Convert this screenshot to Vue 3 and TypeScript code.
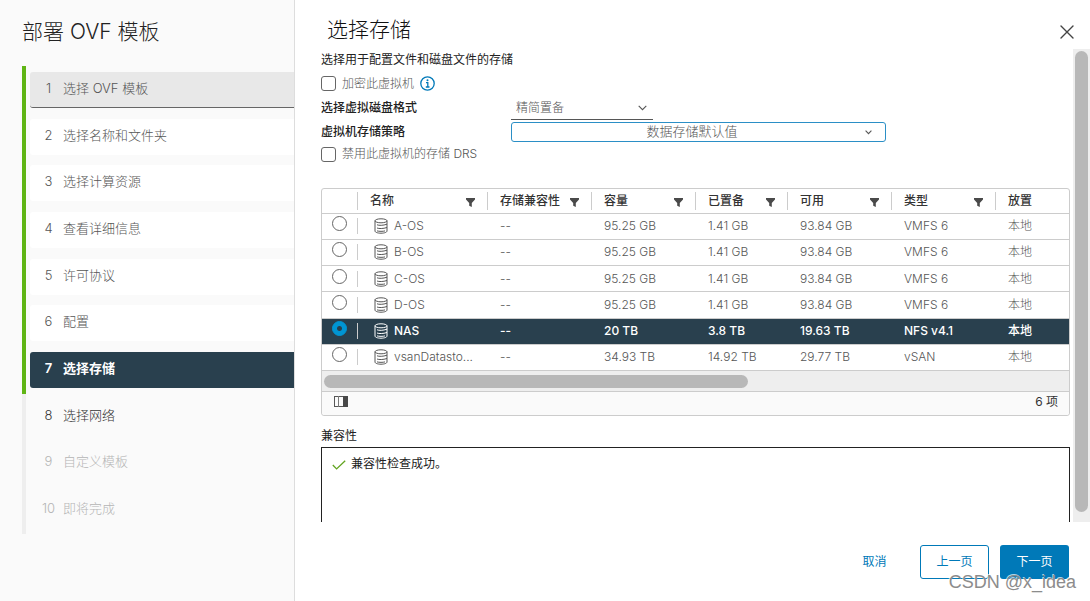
<script setup lang="ts">
import { ref } from 'vue'

type StepState = 'visited' | 'done' | 'active' | 'next' | 'disabled'

interface Step {
  label: string
  state: StepState
}

interface Datastore {
  name: string
  capacity: string
  provisioned: string
  free: string
  type: string
}

const steps: Step[] = [
  { label: '选择 OVF 模板', state: 'visited' },
  { label: '选择名称和文件夹', state: 'done' },
  { label: '选择计算资源', state: 'done' },
  { label: '查看详细信息', state: 'done' },
  { label: '许可协议', state: 'done' },
  { label: '配置', state: 'done' },
  { label: '选择存储', state: 'active' },
  { label: '选择网络', state: 'next' },
  { label: '自定义模板', state: 'disabled' },
  { label: '即将完成', state: 'disabled' },
]

const columns = ['名称', '存储兼容性', '容量', '已置备', '可用', '类型']

const datastores: Datastore[] = [
  { name: 'A-OS', capacity: '95.25 GB', provisioned: '1.41 GB', free: '93.84 GB', type: 'VMFS 6' },
  { name: 'B-OS', capacity: '95.25 GB', provisioned: '1.41 GB', free: '93.84 GB', type: 'VMFS 6' },
  { name: 'C-OS', capacity: '95.25 GB', provisioned: '1.41 GB', free: '93.84 GB', type: 'VMFS 6' },
  { name: 'D-OS', capacity: '95.25 GB', provisioned: '1.41 GB', free: '93.84 GB', type: 'VMFS 6' },
  { name: 'NAS', capacity: '20 TB', provisioned: '3.8 TB', free: '19.63 TB', type: 'NFS v4.1' },
  { name: 'vsanDatasto...', capacity: '34.93 TB', provisioned: '14.92 TB', free: '29.77 TB', type: 'vSAN' },
]

const selected = ref('NAS')
const encrypt = ref(false)
const disableDrs = ref(false)
const diskFormat = ref('thin')
const policy = ref('default')
</script>

<template>
  <div class="wizard">
    <aside class="sidebar">
      <h1 class="wizard-title">部署 OVF 模板</h1>
      <nav class="stepper">
        <div class="track"><div class="track-done"></div></div>
        <ol class="steps">
          <li v-for="(step, i) in steps" :key="step.label">
            <button type="button" class="step" :class="step.state" :disabled="step.state === 'disabled'">
              <span class="step-number">{{ i + 1 }}</span>
              <span>{{ step.label }}</span>
            </button>
          </li>
        </ol>
      </nav>
    </aside>

    <main class="page">
      <header class="page-header">
        <h2 class="page-title">选择存储</h2>
        <button type="button" class="close" aria-label="关闭">
          <svg width="14" height="14" viewBox="0 0 14 14"><path d="M1 1L13 13M13 1L1 13" fill="none" stroke="#444" stroke-width="1.4" stroke-linecap="round" /></svg>
        </button>
      </header>

      <div class="scroll-area">
        <div class="content">
          <p class="intro">选择用于配置文件和磁盘文件的存储</p>
          <div class="check-row encrypt-row">
            <input id="encrypt" v-model="encrypt" type="checkbox" />
            <label for="encrypt">加密此虚拟机</label>
            <svg class="info" width="15" height="15" viewBox="0 0 15 15">
              <circle cx="7.5" cy="7.5" r="6.7" fill="none" stroke="#0079b8" stroke-width="1.3" />
              <circle cx="7.5" cy="4.2" r="1" fill="#0079b8" />
              <path d="M6 6.6H7.8V11M5.8 11H9.5" fill="none" stroke="#0079b8" stroke-width="1.3" />
            </svg>
          </div>
          <div class="field format-field">
            <label for="format">选择虚拟磁盘格式</label>
            <div class="select-box format-box">
              <select id="format" v-model="diskFormat"><option value="thin">精简置备</option></select>
              <svg width="9" height="6" viewBox="0 0 9 6"><path d="M0.7 0.8L4.5 4.7L8.3 0.8" fill="none" stroke="#565656" stroke-width="1.1" /></svg>
            </div>
          </div>
          <div class="field policy-field">
            <label for="policy">虚拟机存储策略</label>
            <div class="select-box policy-box">
              <select id="policy" v-model="policy"><option value="default">数据存储默认值</option></select>
              <svg width="7" height="5" viewBox="0 0 7 5"><path d="M0.6 0.7L3.5 3.7L6.4 0.7" fill="none" stroke="#565656" stroke-width="1.1" /></svg>
            </div>
          </div>
          <div class="check-row">
            <input id="drs" v-model="disableDrs" type="checkbox" />
            <label for="drs">禁用此虚拟机的存储 DRS</label>
          </div>

          <section class="datagrid">
            <table>
              <colgroup>
                <col class="c-radio" /><col class="c-name" /><col class="c-wide" /><col class="c-wide" />
                <col class="c-prov" /><col class="c-wide" /><col class="c-wide" /><col />
              </colgroup>
              <thead>
                <tr>
                  <th aria-label="选择"><div class="head-cell"></div></th>
                  <th v-for="column in columns" :key="column" scope="col">
                    <div class="head-cell">
                      <span>{{ column }}</span>
                      <svg width="9" height="9" viewBox="0 0 9 9"><path d="M0 0H9V1.6L5.8 5V9L3.2 7.8V5L0 1.6Z" fill="#4a4a4a" /></svg>
                    </div>
                  </th>
                  <th scope="col"><div class="head-cell last">放置</div></th>
                </tr>
              </thead>
              <tbody>
                <tr v-for="store in datastores" :key="store.name" :class="{ selected: store.name === selected }">
                  <td>
                    <div class="radio-cell">
                      <input v-model="selected" type="radio" name="datastore" :value="store.name" :aria-label="store.name" />
                    </div>
                  </td>
                  <td>
                    <div class="name-cell">
                      <svg width="14" height="16" viewBox="0 0 14 16" fill="none" stroke="currentColor" stroke-width="1">
                        <ellipse cx="7" cy="2.8" rx="6" ry="2" />
                        <path d="M1 2.8V13C1 14.3 3.7 15.2 7 15.2S13 14.3 13 13V2.8M3 6.8C5 7.6 9 7.6 13 6.2M3 10C5 10.8 9 10.8 13 9.5M3 12.9C5 13.5 9 13.5 11 12.9" />
                      </svg>
                      <span>{{ store.name }}</span>
                    </div>
                  </td>
                  <td>--</td>
                  <td>{{ store.capacity }}</td>
                  <td>{{ store.provisioned }}</td>
                  <td>{{ store.free }}</td>
                  <td>{{ store.type }}</td>
                  <td>本地</td>
                </tr>
              </tbody>
            </table>
            <div class="h-scroll"><div class="h-thumb"></div></div>
            <footer class="grid-footer">
              <button type="button" class="columns-button" aria-label="管理列">
                <svg width="14" height="11" viewBox="0 0 14 11"><rect x="0.5" y="0.5" width="13" height="10" fill="none" stroke="#565656" /><path d="M4.5 0V11" stroke="#777" /><path d="M9 0H14V11H9Z" fill="#484848" /></svg>
              </button>
              <span>6 项</span>
            </footer>
          </section>

          <h3 class="compat-title">兼容性</h3>
          <div class="compat-box">
            <svg width="14" height="10" viewBox="0 0 14 10"><path d="M0.8 5L4.6 8.9L13.2 0.7" fill="none" stroke="#62a420" stroke-width="1.3" /></svg>
            <span>兼容性检查成功。</span>
          </div>
        </div>
        <div class="v-scroll"><div class="v-thumb"></div></div>
      </div>

      <footer class="actions">
        <button type="button" class="btn link">取消</button>
        <button type="button" class="btn outline">上一页</button>
        <button type="button" class="btn primary">下一页</button>
      </footer>
    </main>
    <div class="watermark">CSDN @x_idea</div>
  </div>
</template>

<style>
body {
  margin: 0;
  background: #fff;
}
</style>

<style scoped>
.wizard {
  position: relative;
  display: flex;
  min-height: 100vh;
  font-family: Inter, "Noto Sans CJK SC", sans-serif;
  font-size: 12px;
  line-height: 20px;
  font-weight: 300;
  color: #565656;
}
.wizard * {
  box-sizing: border-box;
}
h1,
h2,
h3,
p,
ol {
  margin: 0;
  padding: 0;
}
button,
input,
select {
  margin: 0;
  font: inherit;
  color: inherit;
}
button {
  border: 0;
  background: none;
  padding: 0;
}
svg {
  display: block;
  flex: none;
}

.sidebar {
  flex: none;
  width: 295px;
  padding-top: 16px;
  border-right: 1px solid #ddd;
  background: #fafafa;
}
.wizard-title {
  margin-left: 22px;
  font-size: 21px;
  line-height: 32px;
  font-weight: 300;
  color: #222;
}
.stepper {
  display: flex;
  gap: 4px;
  height: 468px;
  margin: 18px 0 0 22px;
}
.track {
  width: 4px;
  background: #eee;
}
.track-done {
  height: 70%;
  background: #60b515;
}
.steps {
  flex: 1;
  display: flex;
  flex-direction: column;
  justify-content: space-between;
  padding: 6px 0;
  list-style: none;
}
.step {
  display: flex;
  align-items: center;
  width: 100%;
  height: 36px;
  padding-bottom: 4px;
  border-radius: 3px 0 0 3px;
  font-size: 13px;
  text-align: left;
}
.step-number {
  width: 33px;
  padding-left: 4px;
  text-align: center;
  font-size: 13px;
  line-height: 20px;
  padding-right: 0;
}
.step.done {
  background: #fff;
}
.step.visited {
  background: #e8e8e8;
  border-bottom: 1px solid #666;
}
.step.active {
  background: #29404e;
  color: #fff;
  font-weight: 600;
}
.step.next {
  color: #333;
}
.step.disabled {
  color: #b5b5b5;
}

.page {
  flex: 1;
  min-width: 0;
  display: flex;
  flex-direction: column;
}
.page-header {
  display: flex;
  align-items: center;
  justify-content: space-between;
  height: 49px;
  padding: 14px 16px 0 32px;
}
.page-title {
  margin-bottom: 4px;
  font-size: 21px;
  line-height: 32px;
  font-weight: 300;
  color: #111;
}
.scroll-area {
  flex: 1;
  display: flex;
  gap: 3px;
}
.content {
  flex: 1;
  min-width: 0;
  display: flex;
  flex-direction: column;
  padding-left: 26px;
}
.intro {
  line-height: 22px;
  font-weight: 400;
  color: #222;
}
.check-row {
  display: flex;
  align-items: center;
  gap: 6px;
  height: 22px;
}
.encrypt-row {
  height: 25px;
}
.check-row input {
  appearance: none;
  width: 15px;
  height: 15px;
  border: 1px solid #666;
  border-radius: 3px;
  background: #fff;
}
.check-row input:checked {
  background: #0079b8;
}
.field {
  display: flex;
  align-items: center;
  color: #222;
}
.format-field {
  height: 24px;
}
.policy-field {
  height: 23px;
}
.field > label {
  width: 190px;
  font-weight: 500;
}
.select-box {
  display: grid;
  align-items: center;
  color: #565656;
}
.select-box > * {
  grid-area: 1 / 1;
}
.select-box select {
  appearance: none;
  width: 100%;
  height: 100%;
  border: 0;
  background: none;
}
.select-box svg {
  justify-self: end;
  pointer-events: none;
}
.format-box {
  width: 142px;
  height: 24px;
  border-bottom: 1px solid #565656;
}
.format-box select {
  padding: 0 5px;
}
.format-box svg {
  margin-right: 6px;
}
.policy-box {
  width: 375px;
  height: 20px;
  border: 1px solid #2b8fc6;
  border-radius: 3px;
}
.policy-box select {
  padding: 0 13px 3px 0;
  font-size: 13px;
  line-height: 16px;
  text-align-last: center;
}
.policy-box svg {
  margin-right: 13px;
}

.datagrid {
  margin-top: 23px;
  border: 1px solid #ccc;
  border-radius: 3px;
}
table {
  width: 100%;
  height: 182px;
  table-layout: fixed;
  border-collapse: collapse;
}
.c-radio {
  width: 36px;
}
.c-name {
  width: 130px;
}
.c-wide {
  width: 104px;
}
.c-prov {
  width: 92px;
}
th,
td {
  padding: 0;
  border-bottom: 1px solid #ccc;
  font-weight: 300;
  text-align: left;
  white-space: nowrap;
}
th {
  height: 24px;
}
td {
  padding-left: 12px;
  line-height: 18px;
}
td:first-child {
  padding-left: 0;
}
.head-cell {
  display: flex;
  align-items: center;
  justify-content: space-between;
  height: 18px;
  padding: 0 12px;
  border-right: 1px solid #ccc;
  font-weight: 500;
  color: #333;
}
.head-cell svg {
  margin-top: 4px;
}
.head-cell.last {
  border-right: 0;
}
.radio-cell {
  display: flex;
  justify-content: center;
  height: 16px;
  border-right: 1px solid #ccc;
}
.radio-cell input {
  appearance: none;
  width: 15px;
  height: 15px;
  margin-top: -2px;
  border: 1px solid #666;
  border-radius: 50%;
  background: #fff;
}
.radio-cell input:checked {
  border-color: #0095d3;
  background: radial-gradient(circle, #29404e 2px, #0095d3 3px);
}
.name-cell {
  display: flex;
  align-items: center;
  gap: 6px;
  padding-left: 4px;
}
.selected td {
  background: #29404e;
  color: #fff;
  font-weight: 500;
}
.h-scroll {
  height: 20px;
  padding: 4px 2px 3px;
  background: #eee;
}
.h-thumb {
  width: 57%;
  height: 13px;
  border-radius: 7px;
  background: #b8b8b8;
}
.grid-footer {
  display: flex;
  align-items: center;
  justify-content: space-between;
  height: 24px;
  padding: 0 11px 4px 12px;
  border-top: 1px solid #ccc;
  border-radius: 0 0 3px 3px;
  background: #fafafa;
  font-weight: 400;
  color: #333;
}
.compat-title {
  margin-top: 9px;
  font-size: 12px;
  line-height: 22px;
  font-weight: 400;
  color: #222;
}
.compat-box {
  flex: 1;
  display: flex;
  align-items: flex-start;
  gap: 5px;
  min-height: 60px;
  padding: 6px 10px;
  border: 1px solid #222;
  border-bottom: 0;
  font-weight: 400;
  color: #222;
}
.compat-box svg {
  margin-top: 6px;
}
.v-scroll {
  width: 17px;
  padding: 2px 2px 10px;
  background: #eee;
}
.v-thumb {
  height: 100%;
  border-radius: 7px;
  background: #b8b8b8;
}

.actions {
  display: flex;
  align-items: center;
  justify-content: flex-end;
  gap: 11px;
  height: 79px;
  padding-right: 21px;
}
.btn {
  width: 69px;
  height: 34px;
  border-radius: 3px;
  font-weight: 400;
  color: #0079b8;
}
.btn.outline {
  border: 1px solid #0079b8;
}
.btn.primary {
  background: #0079b8;
  color: #fff;
}
.watermark {
  position: absolute;
  right: 14px;
  bottom: 9px;
  font-family: "Liberation Sans", sans-serif;
  font-size: 18px;
  font-weight: 400;
  color: #8c8c8c;
  text-shadow: -1px -1px 0 #ffffffb0;
  pointer-events: none;
}
</style>
